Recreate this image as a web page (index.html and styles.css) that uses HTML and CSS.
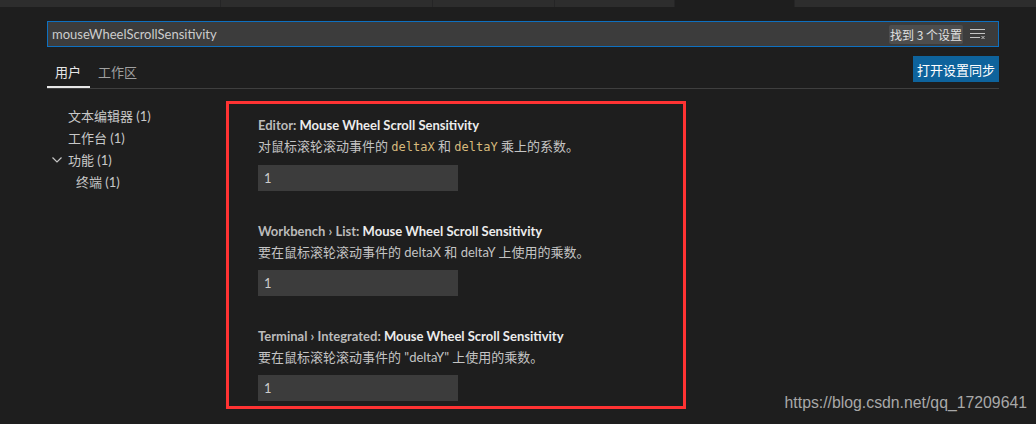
FILE: index.html
```html
<!DOCTYPE html>
<html lang="zh-CN">
<head>
<meta charset="utf-8">
<title>Settings</title>
<link rel="stylesheet" href="styles.css">
</head>
<body>
<div class="tabstrip">
  <div class="tab t1"></div>
  <div class="tab t2"></div>
  <div class="tab t3"></div>
  <div class="tab t4"></div>
  <div class="tab active t5"></div>
  <div class="tab t6"></div>
</div>
<div class="editor">
  <div class="search">
    <span class="query">mouseWheelScrollSensitivity</span>
    <span class="count">找到 3 个设置</span>
    <svg class="clear" width="16" height="12" viewBox="0 0 16 12">
      <g stroke="#c5c5c5" stroke-width="1" fill="none">
        <line x1="0" y1="1.5" x2="15" y2="1.5"/>
        <line x1="0" y1="5.5" x2="15" y2="5.5"/>
        <line x1="0" y1="9.5" x2="10" y2="9.5"/>
        <line x1="11.5" y1="8" x2="14.5" y2="11"/>
        <line x1="14.5" y1="8" x2="11.5" y2="11"/>
      </g>
    </svg>
  </div>
  <div class="tabsrow">
    <div class="scopes">
      <span class="scope current">用户</span>
      <span class="scope">工作区</span>
    </div>
    <button class="sync">打开设置同步</button>
  </div>
  <div class="body">
    <div class="toc">
      <div class="toc-item">文本编辑器 (1)</div>
      <div class="toc-item">工作台 (1)</div>
      <div class="toc-item group"><svg class="chev" width="10" height="6" viewBox="0 0 10 6"><polyline points="0.5,0.5 5,5 9.5,0.5" fill="none" stroke="#c5c5c5" stroke-width="1.2"/></svg>功能 (1)</div>
      <div class="toc-item sub">终端 (1)</div>
    </div>
    <div class="highlight">
      <div class="setting">
        <div class="title"><span class="cat">Editor: </span>Mouse Wheel Scroll Sensitivity</div>
        <div class="desc">对鼠标滚轮滚动事件的 <code>deltaX</code> 和 <code>deltaY</code> 乘上的系数。</div>
        <div class="input">1</div>
      </div>
      <div class="setting">
        <div class="title"><span class="cat">Workbench › List: </span>Mouse Wheel Scroll Sensitivity</div>
        <div class="desc">要在鼠标滚轮滚动事件的 deltaX 和 deltaY 上使用的乘数。</div>
        <div class="input">1</div>
      </div>
      <div class="setting last">
        <div class="title"><span class="cat">Terminal › Integrated: </span>Mouse Wheel Scroll Sensitivity</div>
        <div class="desc">要在鼠标滚轮滚动事件的 "deltaY" 上使用的乘数。</div>
        <div class="input">1</div>
      </div>
    </div>
  </div>
</div>
<div class="watermark">https://blog.csdn.net/qq_17209641</div>
</body>
</html>
```

FILE: styles.css
```css
html, body {
  margin: 0;
  padding: 0;
  background: #1e1e1e;
  width: 1036px;
  height: 424px;
  overflow: hidden;
  font-family: Lato, "Noto Sans CJK SC", sans-serif;
  color: #cccccc;
  position: relative;
}
.tabstrip {
  display: flex;
  height: 7px;
  background: #252526;
}
.tab {
  background: #2d2d2d;
  border-right: 1px solid #252526;
  height: 7px;
}
.t1 { width: 220px; }
.t2 { width: 211px; }
.t3 { width: 121px; }
.t4 { width: 119px; }
.t5 { width: 119px; }
.tab.active { background: #1e1e1e; }
.t6 { flex: 1; border-right: none; }

.editor {
  padding: 14px 37px 0 47px;
}
.search {
  height: 24px;
  border: 1px solid #0e70c0;
  background: #3c3c3c;
  display: flex;
  align-items: center;
  padding: 0 12px 0 4px;
}
.query {
  flex: 1;
  font-size: 13px;
  color: #cccccc;
}
.count {
  background: #4d4d4d;
  color: #e0e0e0;
  font-family: "Noto Sans CJK SC", sans-serif;
  font-size: 12px;
  height: 19px;
  line-height: 19px;
  padding: 0 1px;
  border-radius: 2px;
  margin-right: 7px;
}
.clear { display: block; }

.tabsrow {
  display: flex;
  justify-content: space-between;
  align-items: flex-start;
  margin-top: 10px;
  border-bottom: 1px solid #3f3f3f;
  height: 31px;
}
.scopes {
  display: flex;
  height: 31px;
}
.scope {
  font-size: 13px;
  color: #a0a0a0;
  line-height: 20px;
  padding: 5px 8px 0 8px;
}
.scope.current {
  color: #e7e7e7;
  border-bottom: 2px solid #e7e7e7;
  padding: 5px 9px 0 8px;
  height: 24px;
}
.sync {
  background: #0e639c;
  color: #ffffff;
  border: none;
  font-family: "Noto Sans CJK SC", sans-serif;
  font-size: 13px;
  height: 26px;
  width: 86px;
  padding: 0;
  margin-top: -1px;
}

.body {
  display: flex;
  margin-top: 12px;
}
.toc {
  width: 179px;
  padding-top: 4px;
}
.toc-item {
  font-size: 13px;
  line-height: 22px;
  color: #c8c8c8;
  padding-left: 21px;
  display: flex;
  align-items: center;
}
.toc-item.group { padding-left: 5px; }
.chev { margin-right: 6px; }
.toc-item.sub { padding-left: 29px; }

.highlight {
  box-sizing: border-box;
  width: 460px;
  border: 3px solid #ff3333;
  padding: 11px 0 5px 29px;
}
.setting {
  padding-bottom: 30px;
}
.setting.last { padding-bottom: 0; }
.title {
  font-size: 13px;
  font-weight: 700;
  line-height: 20px;
  color: #ececec;
}
.cat {
  color: #bbbbbb;
  font-weight: 700;
}
.desc {
  font-size: 13px;
  line-height: 20px;
  margin-top: 1px;
  color: #c4c4c4;
}
code {
  font-family: "DejaVu Sans Mono", monospace;
  font-size: 12px;
  color: #d7ba7d;
}
.input {
  margin-top: 8px;
  width: 194px;
  height: 26px;
  line-height: 26px;
  padding-left: 6px;
  background: #3c3c3c;
  font-size: 13px;
  color: #cccccc;
}
.watermark {
  position: absolute;
  right: 9px;
  top: 394px;
  font-family: "Liberation Sans", Arial, sans-serif;
  font-size: 15.8px;
  color: #a8a8a8;
}
```
